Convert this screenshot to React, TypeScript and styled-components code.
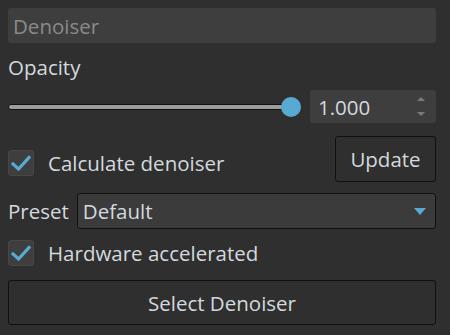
import { useState } from 'react';

import styled, { createGlobalStyle } from 'styled-components';

const colors = {
  page: '#2f2f2f',
  field: '#3e3e3e',
  text: '#d3d9de',
  placeholder: '#8a8a8a',
  accent: '#58aad3',
  border: '#101010',
  arrow: '#7a7a7a',
};

const GlobalStyle = createGlobalStyle`
  html, body {
    margin: 0;
    padding: 0;
    background: ${colors.page};
  }
  body {
    font-family: "Open Sans", "Noto Sans", sans-serif;
    font-size: 20.5px;
    color: ${colors.text};
  }
  * {
    box-sizing: border-box;
  }
`;

function CheckIcon() {
  return (
    <svg width="20" height="16" viewBox="0 0 20 16">
      <path d="M2 9 L7.5 14 L18 2.5" fill="none" stroke={colors.accent} strokeWidth="3.2" strokeLinecap="square" />
    </svg>
  );
}

function SpinArrows() {
  return (
    <svg width="10" height="22" viewBox="0 0 10 22">
      <path d="M1 5 L5 1 L9 5 Z" fill={colors.arrow} />
      <path d="M1 16 L9 16 L5 20 Z" fill={colors.arrow} />
    </svg>
  );
}

function ComboArrow() {
  return (
    <svg width="12" height="7" viewBox="0 0 12 7">
      <path d="M0 0 L12 0 L6 7 Z" fill={colors.accent} />
    </svg>
  );
}

interface CheckBoxProps {
  label: string;
  checked: boolean;
  onToggle: () => void;
}

function CheckBox({ label, checked, onToggle }: CheckBoxProps) {
  return (
    <CheckLabel onClick={onToggle}>
      <CheckSquare>{checked && <CheckIcon />}</CheckSquare>
      <span>{label}</span>
    </CheckLabel>
  );
}

function App() {
  const [opacity] = useState(1);
  const [calculate, setCalculate] = useState(true);
  const [hardware, setHardware] = useState(true);

  return (
    <>
      <GlobalStyle />
      <Panel>
        <TextField placeholder="Denoiser" />
        <Label>Opacity</Label>
        <SliderRow>
          <Slider>
            <Track />
            <Thumb />
          </Slider>
          <SpinBox>
            <span>{opacity.toFixed(3)}</span>
            <SpinArrows />
          </SpinBox>
        </SliderRow>
        <CalcRow>
          <CheckBox label="Calculate denoiser" checked={calculate} onToggle={() => setCalculate(!calculate)} />
          <Button $compact>Update</Button>
        </CalcRow>
        <PresetRow>
          <span>Preset</span>
          <Combo>
            <span>Default</span>
            <ComboArrow />
          </Combo>
        </PresetRow>
        <HardwareRow>
          <CheckBox label="Hardware accelerated" checked={hardware} onToggle={() => setHardware(!hardware)} />
        </HardwareRow>
        <Button>Select Denoiser</Button>
      </Panel>
    </>
  );
}

export default App;

const Panel = styled.div`
  display: flex;
  flex-direction: column;
  width: 450px;
  height: 335px;
  padding: 8px 14px 0 8px;
`;

const TextField = styled.input`
  height: 35px;
  width: 100%;
  padding: 0 5px;
  border: none;
  border-radius: 3px;
  outline: none;
  background: ${colors.field};
  font: inherit;
  color: ${colors.text};

  &::placeholder {
    color: ${colors.placeholder};
  }
`;

const Label = styled.div`
  margin-top: 10px;
  height: 28px;
  line-height: 28px;
`;

const SliderRow = styled.div`
  display: flex;
  align-items: center;
  gap: 9px;
  margin-top: 9px;
`;

const Slider = styled.div`
  flex: 1;
  display: flex;
  align-items: center;
  height: 20px;
`;

const Track = styled.div`
  flex: 1;
  height: 6px;
  margin-right: -4px;
  border: 1px solid ${colors.border};
  border-radius: 3px;
  background: #9d9d9d;
`;

const Thumb = styled.div`
  width: 20px;
  height: 20px;
  border-radius: 50%;
  background: ${colors.accent};
`;

const SpinBox = styled.div`
  display: flex;
  align-items: center;
  justify-content: space-between;
  width: 126px;
  height: 33px;
  padding: 0 10px 0 8px;
  border-radius: 3px;
  background: ${colors.field};
`;

const CalcRow = styled.div`
  display: flex;
  align-items: center;
  justify-content: space-between;
  margin-top: 13px;

  & > label {
    padding-top: 8px;
  }
`;

const CheckLabel = styled.label`
  display: flex;
  align-items: center;
  gap: 14px;
  cursor: pointer;
`;

const CheckSquare = styled.span`
  display: flex;
  align-items: center;
  justify-content: center;
  width: 26px;
  height: 26px;
  border: 1px solid #474747;
  border-radius: 3px;
  background: ${colors.field};
`;

const Button = styled.button<{ $compact?: boolean }>`
  height: ${({ $compact }) => ($compact ? '46px' : '45px')};
  width: ${({ $compact }) => ($compact ? '101px' : '100%')};
  margin-top: ${({ $compact }) => ($compact ? '0' : '13px')};
  border: 1px solid ${colors.border};
  border-radius: 3px;
  background: ${colors.page};
  font: inherit;
  color: ${colors.text};
  padding: 0;
`;

const PresetRow = styled.div`
  display: flex;
  align-items: center;
  gap: 8px;
  margin-top: 11px;
`;

const Combo = styled.div`
  flex: 1;
  display: flex;
  align-items: center;
  justify-content: space-between;
  height: 36px;
  padding: 0 9px 0 5px;
  border: 1px solid ${colors.border};
  border-radius: 3px;
  background: #3b3b3b;
`;

const HardwareRow = styled.div`
  display: flex;
  margin-top: 10px;
`;
